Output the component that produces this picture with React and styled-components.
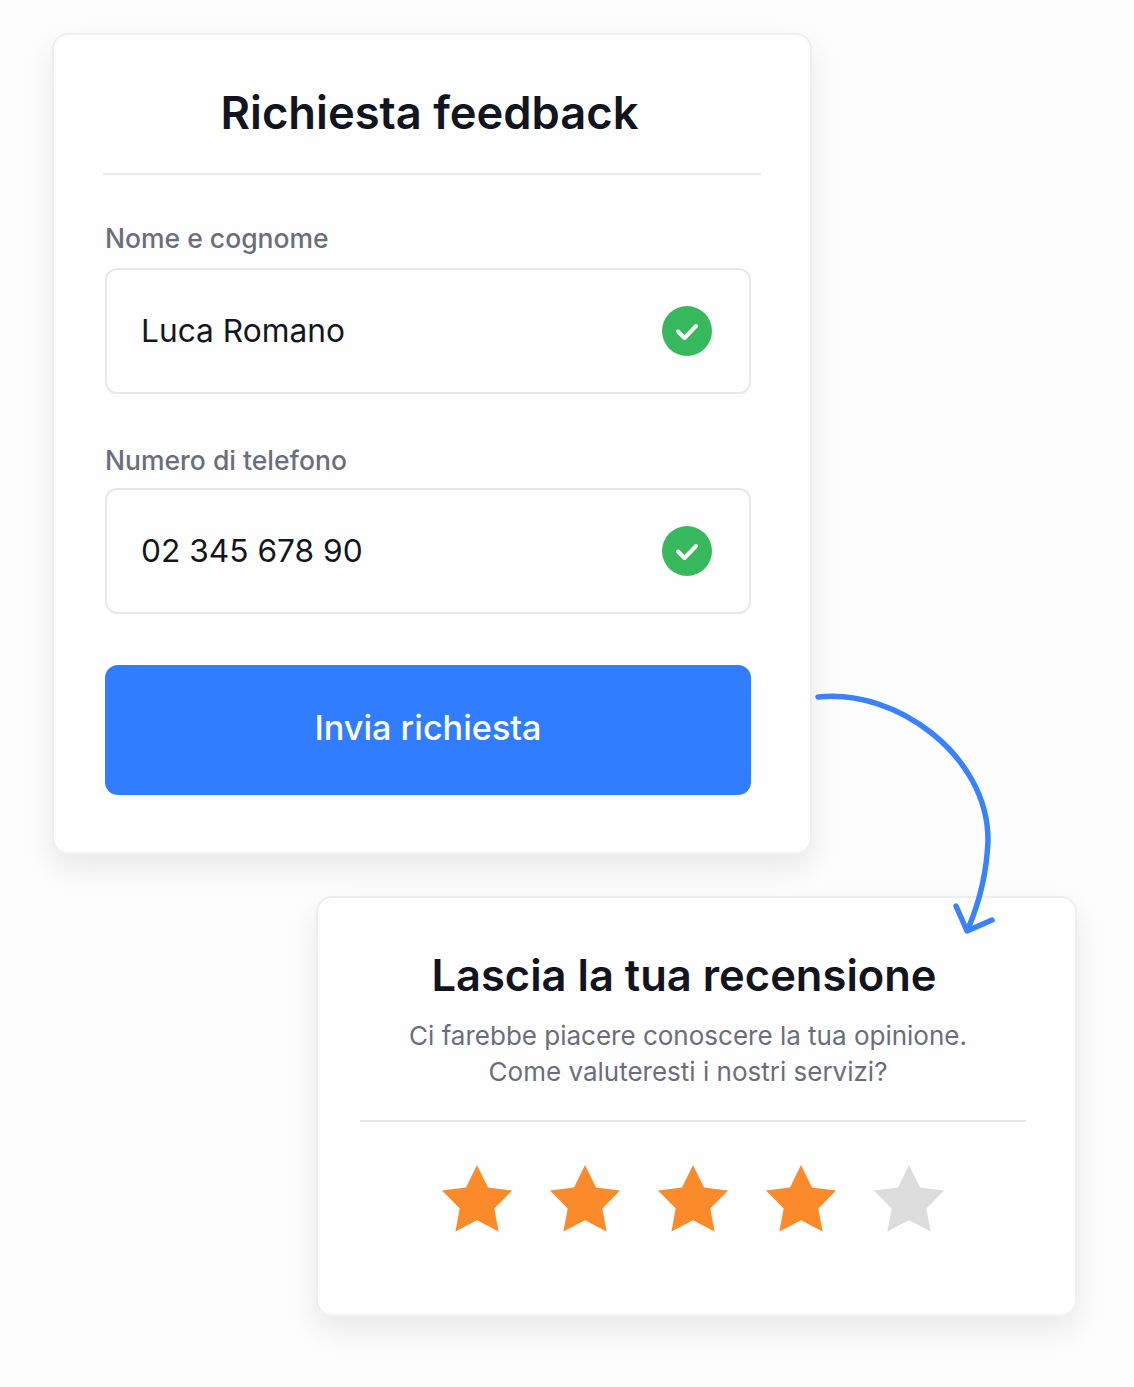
import React from "react";
import styled, { createGlobalStyle } from "styled-components";

const GlobalStyle = createGlobalStyle`
  html, body {
    margin: 0;
    padding: 0;
    background: #fdfdfd;
    font-family: "Inter", "Liberation Sans", sans-serif;
  }
`;

const Page = styled.div`
  position: relative;
  box-sizing: border-box;
  width: 1134px;
  height: 1387px;
  padding: 33px 0 0 52px;
  overflow: hidden;
`;

const Card = styled.section`
  box-sizing: border-box;
  background: #fefefe;
  border: 2px solid #eeeef0;
  border-bottom-color: #f4f4f5;
  border-radius: 16px;
  box-shadow: 0 14px 30px rgba(20, 24, 40, 0.09);
`;

const RequestCard = styled(Card)`
  width: 760px;
  height: 821px;
  padding: 49px 49px 0 49px;
`;

const ReviewCard = styled(Card)`
  width: 761px;
  height: 420px;
  margin: 42px 0 0 264px;
  padding: 48px 49px 0 42px;
`;

const Title = styled.h1`
  margin: 0;
  padding-right: ${(p) => p.$nudge}px;
  font-size: ${(p) => p.$size}px;
  line-height: 58px;
  font-weight: 600;
  color: #12151f;
  text-align: center;
`;

const Divider = styled.hr`
  margin: 0;
  border: 0;
  height: 2px;
  background: #e8e8ea;
`;

const RequestDivider = styled(Divider)`
  margin-top: 31px;
`;

const Form = styled.form`
  display: flex;
  flex-direction: column;
  margin: 45px 10px 0 2px;
`;

const Label = styled.label`
  font-size: 26.5px;
  line-height: 36px;
  font-weight: 500;
  color: #6a6e7c;
  margin-bottom: ${(p) => p.$gap}px;
`;

const Field = styled.div`
  box-sizing: border-box;
  display: flex;
  align-items: center;
  justify-content: space-between;
  height: 126px;
  margin-bottom: ${(p) => p.$gap}px;
  padding: 0 37px 0 34px;
  border: 2px solid #e8e8eb;
  border-radius: 12px;
  background: #fefefe;
`;

const Value = styled.span`
  font-size: 31.7px;
  line-height: 40px;
  color: #14161f;
`;

const SubmitButton = styled.button`
  height: 130px;
  padding: 0 0 5px;
  border: 0;
  border-radius: 13px;
  background: #317dff;
  color: #fff;
  font-family: inherit;
  font-size: 34.2px;
  font-weight: 500;
`;

const Intro = styled.p`
  margin: 14px 0 30px;
  padding-right: 10px;
  font-size: 26px;
  line-height: 36px;
  color: #6a6e7c;
  text-align: center;
`;

const Stars = styled.div`
  display: flex;
  justify-content: center;
  gap: 38px;
  margin-top: 43px;
`;

const Arrow = styled.svg`
  position: absolute;
  left: 0;
  top: 0;
  pointer-events: none;
`;

function CheckBadge() {
  return (
    <svg width="50" height="50" viewBox="0 0 50 50">
      <circle cx="25" cy="25" r="25" fill="#38b85c" />
      <path d="M16 25.5l6.5 6.5L34 20" fill="none" stroke="#fff" strokeWidth="4" strokeLinecap="round" strokeLinejoin="round" />
    </svg>
  );
}

function Star({ color }) {
  return (
    <svg width="70" height="68" viewBox="0 0 70 68">
      <polygon
        points="35,0 46,22.6 70,25.6 52.3,43.6 56.6,66.6 35,55.3 13.4,66.6 17.7,43.6 0,25.6 24,22.6"
        fill={color}
      />
    </svg>
  );
}

export default function App() {
  return (
    <Page>
      <GlobalStyle />
      <RequestCard>
        <Title $size={45.3} $nudge={5}>Richiesta feedback</Title>
        <RequestDivider />
        <Form>
          <Label $gap={12}>Nome e cognome</Label>
          <Field $gap={48}>
            <Value>Luca Romano</Value>
            <CheckBadge />
          </Field>
          <Label $gap={10}>Numero di telefono</Label>
          <Field $gap={51}>
            <Value>02 345 678 90</Value>
            <CheckBadge />
          </Field>
          <SubmitButton type="button">Invia richiesta</SubmitButton>
        </Form>
      </RequestCard>
      <ReviewCard>
        <Title $size={43.5} $nudge={18}>Lascia la tua recensione</Title>
        <Intro>
          Ci farebbe piacere conoscere la tua opinione.
          <br />
          Come valuteresti i nostri servizi?
        </Intro>
        <Divider />
        <Stars>
          <Star color="#fb8a2b" />
          <Star color="#fb8a2b" />
          <Star color="#fb8a2b" />
          <Star color="#fb8a2b" />
          <Star color="#dcdcdc" />
        </Stars>
      </ReviewCard>
      <Arrow width="1134" height="1387" viewBox="0 0 1134 1387" fill="none" stroke="#3a82fb" strokeWidth="5.5" strokeLinecap="round" strokeLinejoin="round">
        <path d="M818 697C895 688 988 755 988 840C987 870 979 903 968 929" />
        <path d="M956 906L967 931L992 920" />
      </Arrow>
    </Page>
  );
}
